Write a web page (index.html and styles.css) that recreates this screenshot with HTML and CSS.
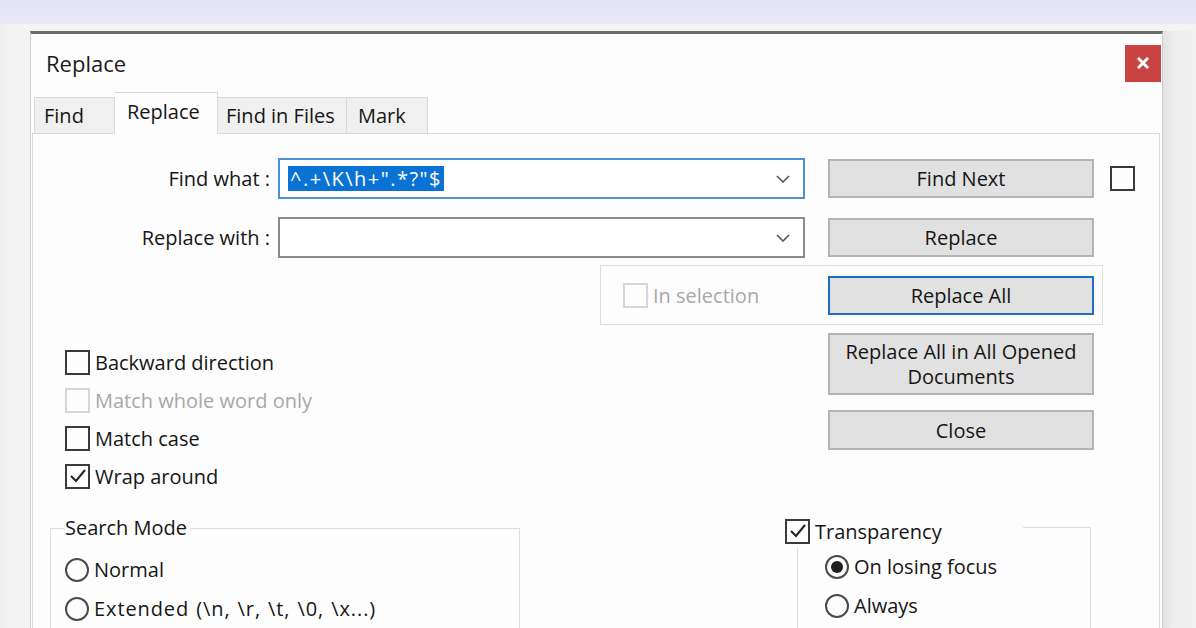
FILE: index.html
```html
<!DOCTYPE html>
<html lang="en">
<head>
    <meta charset="UTF-8">
    <title>Replace</title>
    <link rel="stylesheet" href="styles.css">
</head>
<body>
    <div class="top-band"></div>
    <div class="desk">
        <div class="window">
            <div class="title-bar">
                <span class="title">Replace</span>
                <button class="close-btn" aria-label="Close">
                    <svg width="12" height="12" viewBox="0 0 12 12"><path d="M2 2 L10 10 M10 2 L2 10" stroke="#fff" stroke-width="3" stroke-linecap="square"/></svg>
                </button>
            </div>

            <div class="tabs">
                <div class="tab tab-find">Find</div>
                <div class="tab tab-replace active">Replace</div>
                <div class="tab tab-files">Find in Files</div>
                <div class="tab tab-mark">Mark</div>
            </div>

            <div class="panel">
                <div class="field-row">
                    <label class="field-label">Find what :</label>
                    <div class="combo focused">
                        <span class="combo-text"><span class="selected">^.+\K\h+".*?"$</span></span>
                        <svg class="chevron" width="14" height="8" viewBox="0 0 14 8"><polyline points="1,1 7,7 13,1" fill="none" stroke="#555" stroke-width="1.6"/></svg>
                    </div>
                    <button class="btn">Find Next</button>
                    <span class="box"></span>
                </div>
                <div class="field-row">
                    <label class="field-label">Replace with :</label>
                    <div class="combo">
                        <span class="combo-text"></span>
                        <svg class="chevron" width="14" height="8" viewBox="0 0 14 8"><polyline points="1,1 7,7 13,1" fill="none" stroke="#555" stroke-width="1.6"/></svg>
                    </div>
                    <button class="btn">Replace</button>
                </div>

                <div class="selection-group">
                    <div class="check disabled"><span class="box"></span>In selection</div>
                    <button class="btn default">Replace All</button>
                </div>

                <div class="lower">
                    <div class="options">
                        <div class="check"><span class="box"></span>Backward direction</div>
                        <div class="check disabled"><span class="box"></span>Match whole word only</div>
                        <div class="check"><span class="box"></span>Match case</div>
                        <div class="check"><span class="box checked"><svg width="20" height="18" viewBox="0 0 20 18"><polyline points="3,9 8,14 17,3" fill="none" stroke="#222" stroke-width="2"/></svg></span>Wrap around</div>
                    </div>
                    <div class="actions">
                        <button class="btn tall">Replace All in All Opened<br>Documents</button>
                        <button class="btn">Close</button>
                    </div>
                </div>

                <div class="bottom">
                    <fieldset class="mode-group">
                        <legend>Search Mode</legend>
                        <div class="radio"><span class="dot"></span>Normal</div>
                        <div class="radio wide"><span class="dot"></span>Extended (\n, \r, \t, \0, \x...)</div>
                    </fieldset>
                    <div class="trans-group">
                        <div class="trans-head check"><span class="box checked"><svg width="20" height="18" viewBox="0 0 20 18"><polyline points="3,9 8,14 17,3" fill="none" stroke="#222" stroke-width="2"/></svg></span>Transparency</div>
                        <div class="radio"><span class="dot on"></span>On losing focus</div>
                        <div class="radio"><span class="dot"></span>Always</div>
                    </div>
                </div>
            </div>
        </div>
        <div class="shadow-strip"></div>
    </div>
</body>
</html>
```

FILE: styles.css
```css
body {
    margin: 0;
    width: 1196px;
    height: 628px;
    overflow: hidden;
    background: #f2f2f2;
    font-family: "Open Sans", "Noto Sans", Arial, sans-serif;
    font-size: 20px;
    color: #151515;
}
.top-band {
    height: 24px;
    background: linear-gradient(to bottom, #e4e4f6, #e8e8f7);
}
.desk {
    display: flex;
    padding-top: 7px;
    padding-left: 30px;
    height: 604px;
    box-sizing: border-box;
    background: linear-gradient(to right, #eeeeee, #f4f4f4 10px, #f4f4f4);
}
.window {
    width: 1133px;
    background: #fdfdfd;
    border-top: 3px solid #6e6e6e;
    border-left: 1px solid #cfcfcf;
    border-right: 1px solid #cfcfcf;
    box-sizing: border-box;
}
.shadow-strip {
    width: 33px;
    background: linear-gradient(to right, #e2e2e2, #ededed 30%, #f1f1f1);
}

/* title bar */
.title-bar {
    height: 59px;
    display: flex;
    align-items: center;
    justify-content: space-between;
    padding: 0 1px 0 15px;
}
.title {
    font-size: 22px;
    color: #1a1a1a;
    margin-top: -2px;
}
.close-btn {
    width: 36px;
    height: 37px;
    margin-top: -1px;
    border: none;
    padding: 0;
    background: #c94343;
    display: flex;
    align-items: center;
    justify-content: center;
}

/* tabs */
.tabs {
    display: flex;
    align-items: flex-end;
    padding-left: 3px;
    height: 40px;
}
.tab {
    height: 36px;
    box-sizing: border-box;
    padding-left: 9px;
    line-height: 36px;
    background: #f0f0f0;
    border: 1px solid #dadada;
    border-bottom: none;
}
.tab-find { width: 81px; }
.tab-replace { width: 103px; }
.tab-files { width: 129px; border-left: none; padding-left: 8px; }
.tab-mark { width: 81px; border-left: none; padding-left: 11px; }
.tab.active {
    height: 42px;
    line-height: 38px;
    background: #fdfdfd;
    padding-left: 12px;
    margin-bottom: -1px;
    position: relative;
    border-left: none;
}
.panel {
    margin-left: 1px;
    width: 1128px;
    height: 510px;
    border: 1px solid #dadada;
    border-bottom: none;
    box-sizing: border-box;
    padding-top: 24px;
}

/* find / replace rows */
.field-row {
    display: flex;
    align-items: center;
    height: 41px;
    margin-bottom: 18px;
}
.field-label {
    width: 237px;
    text-align: right;
    flex-shrink: 0;
}
.combo {
    width: 527px;
    height: 41px;
    margin-left: 8px;
    box-sizing: border-box;
    border: 2px solid #8a8a8a;
    display: flex;
    align-items: center;
    justify-content: space-between;
    padding: 0 13px 0 8px;
    background: #fff;
}
.combo.focused {
    border-color: #4d8fdb;
}
.selected {
    background: #0a72d4;
    color: #fff;
    padding: 0 2px;
    line-height: 25px;
    display: inline-block;
    letter-spacing: 1.5px;
}
.btn {
    width: 266px;
    height: 39px;
    margin-left: 23px;
    background: #e1e1e1;
    border: 2px solid #b4b4b4;
    font: inherit;
    color: #151515;
    padding: 0;
    flex-shrink: 0;
}
.field-row .box {
    margin-left: 16px;
}

/* checkboxes & radios */
.box {
    width: 25px;
    height: 25px;
    box-sizing: border-box;
    border: 2px solid #3a3a3a;
    display: inline-flex;
    align-items: center;
    justify-content: center;
    flex-shrink: 0;
}
.check {
    display: flex;
    align-items: center;
    gap: 5px;
    height: 38px;
}
.check.disabled {
    color: #a8a8a8;
}
.check.disabled .box {
    border-color: #d6d6d6;
}
.radio {
    display: flex;
    align-items: center;
    gap: 5px;
    height: 39px;
}
.radio.wide {
    word-spacing: 1px;
    letter-spacing: 0.9px;
}
.dot {
    width: 24px;
    height: 24px;
    box-sizing: border-box;
    border: 2px solid #4a4a4a;
    border-radius: 50%;
    display: inline-flex;
    align-items: center;
    justify-content: center;
    flex-shrink: 0;
}
.dot.on::after {
    content: "";
    width: 12px;
    height: 12px;
    border-radius: 50%;
    background: #1e1e1e;
}

/* in-selection group */
.selection-group {
    margin: -11px 0 0 567px;
    width: 503px;
    height: 60px;
    box-sizing: border-box;
    border: 1px solid #dedede;
    display: flex;
    align-items: center;
    padding-left: 22px;
}
.selection-group .check {
    width: 205px;
}
.selection-group .btn {
    margin-left: 0;
    border-color: #1d6fc4;
}

/* options + side buttons */
.lower {
    display: grid;
    grid-template-columns: 795px 266px;
    margin-top: 8px;
    height: 162px;
}
.options {
    padding: 10px 0 0 32px;
}
.actions {
    display: flex;
    flex-direction: column;
    gap: 15px;
}
.actions .btn {
    margin-left: 0;
    height: 40px;
}
.actions .btn.tall {
    height: 62px;
    line-height: 25px;
}

/* bottom groups */
.bottom {
    display: flex;
    align-items: flex-start;
    margin-top: 20px;
}
.mode-group {
    margin: 0 0 0 17px;
    width: 470px;
    height: 130px;
    box-sizing: border-box;
    border: 1px solid #dedede;
    border-bottom: none;
    padding: 9px 0 0 14px;
}
.mode-group legend {
    padding: 0 3px 0 0;
    line-height: 26px;
}
.trans-group {
    margin: 12px 0 0 277px;
    width: 294px;
    height: 110px;
    box-sizing: border-box;
    border: 1px solid #dedede;
    border-bottom: none;
    padding-left: 27px;
}
.trans-head {
    margin: -13px 0 0 -40px;
    width: 238px;
    height: 32px;
    background: #fdfdfd;
}
.trans-group .radio:first-of-type {
    margin-top: 8px;
}
```
